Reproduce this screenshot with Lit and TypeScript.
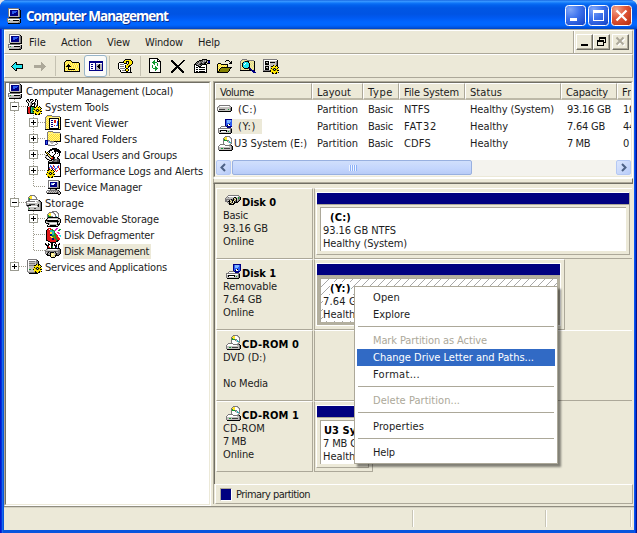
import { LitElement, html, svg, css, nothing } from "lit";
import { customElement, property } from "lit/decorators.js";

// Text run whose tracking is adjusted so that it fills a given advance width.
@customElement("fit-text")
class FitText extends LitElement {
  @property() text = "";
  @property({ type: Number }) w = 0;
  static styles = css`
    :host { display: inline-block; white-space: pre; flex: none; }
  `;
  render() {
    return html`<span>${this.text}</span>`;
  }
  updated() {
    const s = this.renderRoot.querySelector("span") as HTMLElement;
    s.style.letterSpacing = "0px";
    const d = (this.w - s.getBoundingClientRect().width) / this.text.length;
    s.style.letterSpacing = d.toFixed(3) + "px";
  }
}
const t = (text: string, w: number) => html`<fit-text .text=${text} .w=${w}></fit-text>`;

const PAL: Record<string, string> = {
  k: "#000", d: "#424242", g: "#7b797b", l: "#b5b2b5", w: "#fff", n: "#000084", b: "#2c5cf0", c: "#20e6f0",
  y: "#ffe12a", Y: "#fff28c", o: "#848200", G: "#109a30", r: "#e01818", m: "#e020d0", a: "#aca899", t: "#30b0b8",
  s: "#d8d4a0", e: "#7cb4ff", L: "#c2c0bd", p: "#ffe600",
};

// Draws rows of palette letters as one-pixel-high runs; "." is transparent.
const px = (rows: string[], x = 0, y = 0) => {
  const runs: Record<string, string> = {};
  rows.forEach((row, j) => {
    for (const m of row.matchAll(/([^.])\1*/g)) {
      runs[m[1]] = (runs[m[1]] ?? "") + `M${x + m.index!} ${y + j}h${m[0].length}v1h-${m[0].length}z`;
    }
  });
  return Object.entries(runs).map(([c, d]) => svg`<path fill=${PAL[c]} d=${d} />`);
};

const GEAR = [
  "...kp.k..",
  ".kkppkpk.",
  ".pppppppk",
  ".kpokopk.",
  "ppokLkopp",
  "kppokopkk",
  ".ppppppp.",
  ".pkpppkpk",
  "..kkpkk..",
];
const DISC = [
  "...ggggg..",
  "..gyywwLg.",
  ".gyyywwwLg",
  ".gGyywwwwg",
  ".gGGGggwwg",
  ".gwwwgLtwg",
  ".gwwwwLttg",
  ".gwwwwwwLg",
  "..gwwwwLg.",
  "...ggggg..",
];

const icons: Record<string, unknown> = {
  pc: px([
    "..ggggggggggg...",
    "..gwwwwwwwwwlk..",
    "..gwnnnnnnnnlgk.",
    "..gwnnbbbbbnlgk.",
    "..gwnnbbbbnnlgk.",
    "..gwnnbbnnnnlgk.",
    "..gwnnnnnnnnlgk.",
    "..gwnnnnnnnnlgk.",
    "..gllllllllllgk.",
    "...kkkkkkkkkkkk.",
    ".gggggggggggg...",
    ".gwwwwwwwwwwwlk.",
    ".gLGLLLkkkkkklk.",
    ".gLLLLLLLLLLLgk.",
    "..llllllllllggk.",
    "..kkkkkkkkkkkk..",
  ]),
  back: px([
    ".....kk.........",
    "....kck.........",
    "...kcckkkkkkk...",
    "..kccccccccck...",
    ".kcccccccccck...",
    "..kccccccccck...",
    "...kcckkkkkkk...",
    "....kck.........",
    ".....kk.........",
  ], 0, 4),
  fwd: px([
    "........a.......",
    "........aa......",
    "........aaa.....",
    ".aaaaaaaaaaa....",
    ".aaaaaaaaaaaa...",
    ".aaaaaaaaaaa....",
    "........aaa.....",
    "........aa......",
    "........a.......",
  ], 0, 4),
  up: px([
    "..kkkkk.........",
    ".kyYyYyk........",
    "kyYyYyYykkkkkkk.",
    "kYyYyYyYyYyYyYyk",
    "kyYykYyYyYyYyYyk",
    "kYykkkYyYyYyYyYk",
    "kykkkkkyYyYyYyYk",
    "kYyYkyYyYyYyYyYk",
    "kyYykYyYyYyYyYyk",
    "kYyYkkkkkkkYyYyk",
    "kyYyYyYyYyYyYyYk",
    "kkkkkkkkkkkkkkkk",
  ], 0, 2),
  tree: px([
    "nnnnnnnnnnnnnn",
    "nnnnnnnnnnnnnn",
    "nwwwwwnwwwwwwn",
    "nwnnwwnlllklln",
    "nwwwwwnllkklln",
    "nwnnwwnlkkklln",
    "nwwwwwnllkklln",
    "nwnnwwnlllklln",
    "nwwwwwnlllllln",
    "nnnnnnnnnnnnnn",
  ], 1, 3),
  help: px([
    ".......kkkkkk...",
    "......kppppppk..",
    ".....kppkkkpppk.",
    ".kkkkkppk.kpppk.",
    "kwwwwwkkk.kpppk.",
    "kwggggww.kpppk..",
    "kwwwwwwkpppkk...",
    "kwggggwkppkk....",
    "kwwwwwwkppkwk...",
    "kwgggggwkkwwk...",
    ".kwwwwwkppkwk...",
    "..kwgggkppkwk...",
    "..kwwwwwkkwwk...",
    "...kkkkkkkkkkk..",
  ], 1, 1),
  refresh: px([
    ".kkkkkkkkk......",
    ".kwwwwwwwkk.....",
    ".kwwwwGwwkwk....",
    ".kwwwGGwwkkkk...",
    ".kwwGGGGGwwwk...",
    ".kwwwGGwwGwwk...",
    ".kwwwwGwwGwwk...",
    ".kwwGwwwwGwwk...",
    ".kwwGwwGwwwwk...",
    ".kwwGwwGGwwwk...",
    ".kwwwGGGGGwwk...",
    ".kwwwwwGGwwwk...",
    ".kwwwwwGwwwwk...",
    ".kwwwwwwwwwwk...",
    ".kkkkkkkkkkkk...",
  ], 0, 0),
  del: px([
    "kk..........kk..",
    "kkk........kk...",
    ".kkk......kk....",
    "..kkk....kk.....",
    "...kkk..kk......",
    "....kkkkk.......",
    ".....kkk........",
    "....kkkkk.......",
    "...kkk.kkk......",
    "..kkk...kkk.....",
    ".kkk.....kkk....",
    "kkk.......kkk...",
    "kk.........kk...",
  ], 1, 2),
  props: px([
    "........kkkkk...",
    ".....kkkdlgldkkk",
    "...kkgdgdlglkLnn",
    "..kgdlgdlgdkkLnn",
    ".kgdlgdkdgkk.kkk",
    "kkdlgdkdkkkkk...",
    "kwkkdlgkwwwwk...",
    "kwwwkkkwwwwwk...",
    "kwkkwkkkkkkwk...",
    "kwwwwwwwwwwwk...",
    "kwkkwkkkkkkwk...",
    "kwwwwwwwwwwwk...",
    "kwkkwkkkkkkwk...",
    "kkkkkkkkkkkkk...",
  ], 0, 1),
  open: px([
    ".........kkk....",
    "........k...k.k.",
    ".............kk.",
    ".kkk........kkk.",
    "kyYykkkkkkk.....",
    "kYyYyYyYyYk.....",
    "kyYyYyYyYyk.....",
    "kYyYkkkkkkkkkkk.",
    "kyYkoooooooook..",
    "kYkoooooooook...",
    "kykoooooooook...",
    "kkoooooooook....",
    "kkkkkkkkkkk.....",
  ], 0, 2),
  find: px([
    "..ggggg.........",
    ".gsYsYsggggggg..",
    "gsYsgkkkksYsYsk.",
    "gYskcccckYsYsYk.",
    "gskccwccckYsYsk.",
    "gYkcwccccksYsYk.",
    "gskcccccckYsYsk.",
    "gYkcccccckYsYsk.",
    "gsYkcccckksYsYk.",
    "gYsYkkkkdnnYsYk.",
    "gsYsYsYsYknnYsk.",
    "kkkkkkkkkkknnnk.",
    "............nnn.",
    ".............nnn",
  ], 0, 1),
  sets: [px([
    "gggggggggggggg..",
    "gwwwwwwwwwwwwwk.",
    "gwkkkkwLLLLLLgk.",
    "gwkLLkwkkkkkLgk.",
    "gwkkdkwLLLLLLgk.",
    "gwkkkkwLLLLLLgk.",
    "gwLLLLLLLLLLLgk.",
    "gwkkkkwLkkkkLgk.",
    "gwkLLkwLLLLLLgk.",
    "gwkkdkwLLLLLLgk.",
    "gwkkkkwLLLLLLgk.",
    "gggggggggggggggk".slice(0, 15),
    "kkkkkkkkkkkkkkk.",
  ], 0, 1), px(GEAR, 7, 7)],
  tools: [px([
    ".kk.kkk..kk.....",
    "klk.kwlk.kwk....",
    "kwlkwlk..kwk....",
    ".kwllk..kwwk....",
    "..kwlgkkkgwk....",
    "..kwlgk.kgwk....",
    "..kwgk..kwgk....",
    ".kwgkkkkkwlk....",
    ".krrktGGkwlk....",
    ".krrktGGkggk....",
    ".krrktGGkwgk....",
    ".krrktGGkwgk....",
    ".krrktGGkkkk....",
    ".krrktGGk.......",
    ".kkrkkkkk.......",
  ]), px(GEAR, 7, 7)],
  event: px([
    "..ggggg.........",
    ".gyyyyygggggggg.",
    "gyYYYYYYYYYYYYyk",
    "gYyYkkkkkkkkkkYk",
    "gyYykwwwwwwwwkyk",
    "gYyYkwnnwrrwwkYk",
    "gyYykwwwwrrwbkyk",
    "gYyYkwnnwrrwbkYk",
    "gyYykwwwwwwwbkyk",
    "gYyYkwnnwwwwbkYk",
    "gyYykwwwwrwbbkyk",
    "gYyYkwnnwwwwwkYk",
    "gyYykwwwwwwwwkyk",
    "gYyYkkkkkkkkkkYk",
    "kkkkkkkkkkkkkkkk",
  ], 0, 0),
  share: px([
    "...ggggg........",
    "..gyYyYyggggggg.",
    "..gYYYYYYYYYYYYg",
    "..gYyYyYyYyYyYyk",
    "..gyYyYyYyYyYyYk",
    "..gYyYyYyYyYyYyk",
    "..gyYyYyYyYyYyYk",
    "..gYyYyYyYyYyYyk",
    "..gyYyYyYyYyYyYk",
    "nnnggYyYyYyYyYyk",
    "nbnLLggggkkkkkkk",
    "nbnwwLLLLwwg....",
    "nbnwwwLLwwwwg...",
    "nnnLLwwwwwgg....",
    "...ggggggg......",
  ], 0, 0),
  users: px([
    ".......kkkkk....",
    ".....kkkkkkkkk..",
    "....kkkwwkkkkkk.",
    "k..kkwwwwkkdkkkk",
    "kyk.kwwkwwkwwkkk",
    ".kyk.wwwwwkwkwk.",
    "..kykwwwwkwwwwk.",
    "LkkLykwwkwwwwwk.",
    "LLwkLykkkwwwwk..",
    "kLwwkLyrkkwwk...",
    ".kLwwkrrkdwwkk..",
    "..kkLwkkkddggdk.",
    "....kkkLddggddk.",
    "...klLLddgggddk.",
    "...kkkkkkkkkkkk.",
  ], 0, 1),
  perf: [px([
    "...kkkkkkkkkkkkk",
    "...kwwwwwwwwwwwk",
    "...kwbwwrwwwwbwk",
    "...kwbbwrbwwbrwk",
    "...kbwbrwbwwbrwk",
    "...krwrbrwbbwwrk",
    "...kwrwbwrbwwwrk",
    "...kwwwwbwrwrwwk",
    "...kwwwwwwwrwwwk",
    "...kwwwwwwwwwwwk",
    "...kwwwwwwwwwwwk",
    "...kwwwwwwwwwwwk",
    "...kwwwwwwwwwwwk",
    "...kkkkkkkkkkkkk",
  ], 0, 0), px(GEAR, 1, 6)],
  dev: px([
    "...ggggggggggg..",
    "...gwwwwwwwwwgk.",
    "...gwnnnnnnnlgk.",
    "...gwneewwnnlgk.",
    "...gwnewwnnnlgk.",
    "...gwnnnnnnnlgk.",
    "...gwnnnnnnnlgk.",
    "...gllllllllggk.",
    "...kkkkkkkkkkkk.",
    ".....dLLLLdk....",
    "..gggggggggggk..",
    ".gwLgLgLgLgLgLk.",
    ".gLgLgLgLgLgdgLk",
    "..kkkkkkkkkkkgLk",
    ".............kk.",
  ], 0, 1),
  storage: [px(DISC, 1, 0), px([
    "....gggggggg....",
    "...gwwwwwwwwgk..",
    "gggggggggwLLLgk.",
    "gwwwwwwwwwwLLLgk",
    "gLLLLLLLLLLLLLgk",
    "gLLddddddLLLkLgk",
    "gkkkkLLLLLLdkLgk",
    ".ggwwwwwwwwLkLgk",
    "..gLLLLLLLLLLLgk",
    "..gGLLLLddLLLLgk",
    "..gLLLLLLLLLLLgk",
    "..kkkkkkkkkkkkkk",
  ], 0, 4)],
  remov: [px(DISC, 4, 0), px(DISC, 1, 1), px([
    "...kkkkkkkkkk...",
    "..kLLLLLLLLLLkk.",
    ".kLwwwwwwwwwLLLk",
    "kkkkkkkkkkkkkLLk",
    "kLdkkkkkkkkkkkLk",
    "kLLLLLLLLLLLkLLk",
    ".kkkLwwwwwwwkLk.",
    "...kLLLLLLLLkkk.",
    "..kwLkkkkkkLLk..",
    "..kkkkkkkkkkk...",
  ], 0, 6)],
  defrag: px([
    "..rrr.....mm....",
    ".krwrrG..mm..GG.",
    "krrrttGGmm..GG..",
    "krrrttttG......m",
    "krrryyttG..mm..m",
    "krrryyttGr..mm..",
    "krrrnnttGGr.....",
    "krrrnnGGGGrr.cc.",
    "krrryyGGoGrr..cc",
    "krrrryyooGrrr...",
    "krrrrrnnoGGrrr..",
    "krrrrrnnrrGrrr..",
    "kkrrrrrrrrGkk...",
    "..kkrrrrrrkk....",
    "....kkkkkk......",
  ], 1, 1),
  dm: px([
    "k..k..kk..k...k.",
    "kk.kk.kk.k.k.kk.",
    ".kkk..kk.kkk.k..",
    "..kr..kG..kk.k..",
    "..krr.kG..kb.k..",
    "..kkkkkkkkkkkkk.",
    ".gLwwwwwwwwwLLgk",
    "gLLLLLLLLLLLLggk",
    "gggddggggddggggk",
    "gLgkLkkkkLkLLggk",
    "gLkLgkYYYLgkgggk",
    ".kkgLkYwYYgkggk.",
    "..kkkkYYYLkkkk..",
    ".....kYYLYk.....",
    "......kkkk......",
  ], 0, 0),
  serv: [px([
    ".ggggggggg......",
    "gwwwwwwwwgk.....",
    "gwggggggLggk....",
    "gwLLLLLLLggk....",
    "gwggggggLggk....",
    "gwLLLLLLLggk....",
    "gwggggggLggk....",
    "gwLLLLLLLggk....",
    "gwLLLLLLLggk....",
    "gwLLLLLLLggk....",
    "gwGGLLLLLggk....",
    "gwLLLLLLLggk....",
    "gLLLLLLLLggk....",
    ".ggggggggggk....",
    "..kkkkkkkkk.....",
  ], 1, 0), px(GEAR, 7, 5)],
  hdd: px([
    "..ggggggggggg...",
    ".gLwwwwwwwwwLg..",
    "gLLLLLLLLLLLLLk.",
    "gwLLLLLLLLLLLgk.",
    "gwddddddLLLGLgk.",
    "gLLLLLLLLLLLLgk.",
    ".kkkkkkkkkkkkk..",
  ], 0, 3),
  rem: [px([
    "....ggggggggg...",
    "...gwwwwwwwwLg..",
    ".gggggggggggggg.",
    ".gwwwwwwwwwwwgk.",
    ".gLkkkkkkkLLLgk.",
    ".gLkwwwwwkLGLgk.",
    ".gLLLLLLLLLLLgk.",
    "..kkkkkkkkkkkk..",
  ], 0, 7), px([
    "nnnnnnnn",
    "nbeeeebn",
    "nbeeeebn",
    "nbeeebbn",
    "nbbbbbbn",
    "nbbwkbbn",
    "nbkwwbbn",
    ".nnnnnn.",
    "..nnnn..",
  ], 8, 0)],
  cdr: [px([
    "...ggggggggggg..",
    "..gwwwwwwwwwLgk.",
    ".gwwwwwwwwwwLLgk",
    ".gLLLLLLLLLLLLgk",
    ".gLLGGLddddddLgk",
    ".gLLLLLLLLLLLLgk",
    "..kkkkkkkkkkkkk.",
  ], 0, 8), px(DISC, 5, 0)],
  disk0: px([
    "...ggggggggggg..",
    "..gwwwwwwwwwwLg.",
    ".gLgLLLLLkkLLGgk",
    "gLLLLLLLkYgkLGgk",
    "ggggggkgkgYkLggk",
    "ggLLkYgkkYgkLgk.",
    "gggkkgYk.kgkgk..",
    "..gLkYgk.kkkk...",
    "...gkkgYkk......",
    "....kkkkk.......",
  ], 0, 2),
};
icons.sets = [px([
  "gggggggggggggg..",
  "gwwwwwwwwwwwwwk.",
  "gwkkkkwLLLLLLgk.",
  "gwkLLkwkkkkkLgk.",
  "gwkkdkwLLLLLLgk.",
  "gwkkkkwLLLLLLgk.",
  "gwLLLLLLLLLLLgk.",
  "gwkkkkwLkkkkLgk.",
  "gwkLLkwLLLLLLgk.",
  "gwkkdkwLLLLLLgk.",
  "gwkkkkwLLLLLLgk.",
  "ggggggggggggggk.",
  "kkkkkkkkkkkkkkk.",
], 0, 1), px(GEAR, 7, 7)];
const ic = (n: string) => html`<svg class="ic" width="16" height="16" viewBox="0 0 16 16" shape-rendering="crispEdges">${icons[n]}</svg>`;

type Node = [number, string, string, number, string];
// level, icon, label, width, expander
const TREE: Node[] = [
  [0, "pc", "Computer Management (Local)", 147, ""],
  [1, "tools", "System Tools", 64, "-"],
  [2, "event", "Event Viewer", 64, "+"],
  [2, "share", "Shared Folders", 73, "+"],
  [2, "users", "Local Users and Groups", 113, "+"],
  [2, "perf", "Performance Logs and Alerts", 139, "+"],
  [2, "dev", "Device Manager", 78, "end"],
  [1, "storage", "Storage", 39, "-"],
  [2, "remov", "Removable Storage", 95, "+"],
  [2, "defrag", "Disk Defragmenter", 90, ""],
  [2, "dm", "Disk Management", 85, "end"],
  [1, "serv", "Services and Applications", 122, "+"],
];

const VOLUMES: [string, [string, number][]][] = [
  ["hdd", [["(C:)", 19], ["Partition", 41], ["Basic", 25], ["NTFS", 26], ["Healthy (System)", 84], ["93.16 GB", 44], ["10", 12]]],
  ["rem", [["(Y:)", 18], ["Partition", 41], ["Basic", 25], ["FAT32", 33], ["Healthy", 38], ["7.64 GB", 38], ["44", 12]]],
  ["cdr", [["U3 System (E:)", 73], ["Partition", 41], ["Basic", 25], ["CDFS", 27], ["Healthy", 38], ["7 MB", 23], ["0 M", 17]]],
];
const HEADS: [string, number][] = [["Volume", 34], ["Layout", 34], ["Type", 25], ["File System", 55], ["Status", 32], ["Capacity", 42], ["Free", 22]];

// toolbar entries with the gap in front of each; "|" is a separator
const TOOLS: [string, number][] = [
  ["back", 0], ["fwd", 7], ["|", 6], ["up", 8], ["tree", 4], ["|", 2], ["help", 7], ["|", 7], ["refresh", 7],
  ["del", 6], ["props", 8], ["open", 7], ["find", 7], ["sets", 7],
];

const MENU: ([string, number, string] | null)[] = [
  ["Open", 27, ""], ["Explore", 37, ""], null,
  ["Mark Partition as Active", 114, "off"], ["Change Drive Letter and Paths...", 161, "hot"], ["Format...", 47, ""], null,
  ["Delete Partition...", 87, "off"], null, ["Properties", 51, ""], null, ["Help", 22, ""],
];

@customElement("app-root")
class AppRoot extends LitElement {
  static styles = css`
    * { box-sizing: border-box; }
    :host { display: block; position: relative; width: 637px; height: 533px; overflow: hidden; background: #dfe3ea;
      font: 11px/13px "DejaVu Sans Condensed", "DejaVu Sans", sans-serif; color: #1c1c1c; cursor: default; }
    .ic { display: block; flex: none; }
    .win { display: flex; flex-direction: column; height: 533px; border-radius: 7px 7px 0 0; overflow: hidden;
      background: linear-gradient(90deg, #0019cf 0 1px, #0831d9 1px 2px, #166aee 2px 3px, #0855dd 3px 4px, #0855dd 4px 634px, #0855ee 634px 635px, #0038dc 635px 636px, #00138c 636px); }
    .title { flex: none; height: 29px; display: flex; align-items: center; padding: 2px 5px 0 6px;
      background: linear-gradient(#0a58d8 0, #3d98ff 1px, #2b8fff 2px, #1076f8 3px, #0262ee 5px, #0056e4 8px, #0054e3 14px, #005af2 18px, #0066ff 22px, #0066ff 25px, #0058e8 27px, #0044c0 29px); }
    .title b { margin-left: 4px; flex: 1; font: 700 13.5px/18px "Open Sans", "Noto Sans", sans-serif; color: #fff; text-shadow: 1px 1px #0b2f8c; }
    .cap { display: block; margin-left: 2px; }
    .body { flex: 1; margin: 0 3px 3px 4px; background: #ece9d8; display: flex; flex-direction: column; border-top: 1px solid #aca899; min-height: 0; }
    .bar { flex: none; height: 24px; display: flex; border: 1px solid; border-color: #fff #aca899 #aca899 #fff; margin-right: 1px; }
    .menubar { align-items: center; padding-left: 2px; }
    .menubar .gap { flex: 1; }
    .m1 { margin-left: 6px; } .m2 { margin-left: 15px; }
    .mdi { height: 22px; display: flex; align-items: center; padding: 0 2px; border-left: 1px solid #aca899; box-shadow: inset 1px 0 #fff; width: 59px; }
    .mb { width: 17px; height: 16px; border: 1px solid; border-color: #fff #716f64 #716f64 #fff; box-shadow: inset -1px -1px #aca899; flex: none; }
    .mb:last-child { margin-left: 2px; }
    .mb svg { display: block; }
    .tools { align-items: center; padding-left: 5px; }
    .tools .sep { width: 1px; height: 20px; background: #c5c2b2; flex: none; }
    .press { width: 23px; height: 22px; border: 1px solid #98b5c8; border-radius: 3px; background: #fbfbf8; display: flex; align-items: center; justify-content: center; flex: none; }
    .main { flex: 1; display: flex; padding-top: 3px; min-height: 0; }
    .pane { border: 1px solid; border-color: #aca899 #fff #fff #aca899; }
    .inner { border: 1px solid; border-color: #716f64 #ece9d8 #ece9d8 #716f64; height: 100%; overflow: hidden; }
    .tree { width: 207px; flex: none; }
    .tree .inner { background: #fff; padding: 0 0 0 1px; }
    .node { height: 16px; display: flex; align-items: center; }
    .node .lab { height: 15px; padding: 1px 2px 0 1px; margin-left: 2px; }
    .node.sel .lab { background: #ece9d8; }
    .g { width: 19px; height: 16px; flex: none; display: block; }
    .right { flex: 1; margin-left: 2px; display: flex; flex-direction: column; min-width: 0; }
    .list { height: 97px; flex: none; margin-right: 1px; }
    .list .inner { background: #fff; }
    .cols { display: grid; grid-template-columns: 97px 51px 36px 66px 96px 56px 16px; }
    .h { height: 17px; background: #ece9d8; border: 1px solid; border-color: #fff #aca899 #aca899 #fff; border-bottom: 2px solid #bdb9a8; padding: 2px 0 0 4px; overflow: hidden; }
    .r { height: 17px; padding-left: 5px; display: flex; align-items: center; overflow: hidden; }
    .r.num { padding-left: 6px; }
    .r:first-child { padding-left: 2px; }
    .rows { padding-top: 1px; height: 60px; }
    .vn { padding: 1px 2px 1px 5px; height: 15px; }
    .vn.sel { background: #ece9d8; padding-right: 6px; margin-left: -1px; padding-left: 6px; }
    .vn.long { padding: 1px 0 1px 1px; }
    .scroll { height: 16px; display: flex; background: #f4f3ee; }
    .sb { width: 15px; height: 15px; margin: 0 0 0 1px; border: 1px solid #b4c8f4; border-radius: 2px; background: linear-gradient(135deg, #dce6fd, #b8ccf8); flex: none; }
    .thumb { width: 240px; height: 15px; margin-left: 1px; border: 1px solid #98b0e0; border-radius: 2px; background: linear-gradient(#d0dffc, #c3d5fd 60%, #b8cbf6); display: flex; justify-content: center; align-items: center; gap: 1px; }
    .thumb i { width: 1px; height: 6px; background: #eef4fe; box-shadow: 1px 0 #8cb0f8; }
    .sp { flex: 1; }
    .split { flex: none; height: 6px; margin-right: 1px; border: 1px solid; border-color: #fff #716f64 #716f64 #aca899; box-shadow: inset 0 -1px #aca899; }
    .graph { flex: 1; display: flex; flex-direction: column; border-left: 1px solid #aca899; margin: 0 1px 2px 0; min-height: 0; }
    .disks { flex: 1; border-left: 1px solid #716f64; padding: 4px 0 0 1px; }
    .disk { height: 71px; display: flex; }
    .di { width: 97px; border: 1px solid; border-color: #fff #aca899 #aca899 #fff; padding: 7px 0 0 6px; flex: none; }
    .dn { height: 13px; display: flex; align-items: center; font-weight: bold; color: #000; padding-left: 2px; gap: 1px; }
    .dn .ic { margin-top: -4px; }
    .ln { height: 13px; }
    .pa { border: 1px solid; border-color: #fff #aca899 #aca899 #aca899; margin-left: 1px; padding: 3px 2px 3px 1px; flex: none; }
    .d0 .pa, .d2 .pa { width: 318px; border-right: 0; }
    .d1 .pa { width: 251px; } .d3 .pa { width: 59px; }
    .part { height: 63px; border: 1px solid; border-color: #fff #aca899 #aca899 #fff; display: flex; flex-direction: column; }
    .d1 .part { width: 245px; border-color: #fff; } .d0 .part { width: 314px; } .d3 .part { width: 53px; }
    .navy { height: 11px; background: #000080; flex: none; }
    .pb { flex: 1; border-top: 1px solid #aca899; padding: 2px 3px 3px 3px; }
    .pw { height: 100%; background: #fff; border-top: 1px solid #aca899; border-left: 1px solid #aca899; padding: 3px 0 0 2px; overflow: hidden; }
    .d1 .pb { background: #b4b09f; }
    .d1 .pw { background: linear-gradient(135deg, #fff 45%, #a8a8a8 47% 53%, #fff 55%) 0 0 / 8px 8px; }
    .d1 .pw fit-text { background: #fff; }
    .pt { padding-left: 7px; font-weight: bold; color: #000; height: 13px; }
    .pt.flush { padding-left: 1px; }
    .legend { height: 20px; flex: none; margin: 0 0 0 1px; border: 1px solid; border-color: #fff #aca899 #aca899 #fff; display: flex; align-items: center; padding-left: 4px; gap: 4px; }
    .sw { width: 12px; height: 13px; background: #000080; border: 1px solid; border-color: #aca899 #fff #fff #aca899; }
    .status { height: 24px; flex: none; border-top: 1px solid #908d80; box-shadow: inset 0 1px #d4d1c2; display: flex; padding-top: 3px; }
    .status div { border-right: 1px solid #c8c5b6; box-shadow: 1px 0 #fff; height: 17px; }
    .s1 { width: 409px; } .s2 { width: 133px; } .s3 { width: 85px; }
    .menu { position: absolute; left: 354px; top: 286px; width: 204px; height: 178px; background: #fff; border: 1px solid #aca899; padding: 2px; box-shadow: 3px 3px 2px rgba(0,0,0,.45); }
    .mi { height: 17px; padding: 2px 0 0 16px; }
    .off { color: #aca899; } .hot { background: #316ac5; color: #fff; }
    .ms { height: 9px; padding: 3px 1px 0; } .ms i { display: block; height: 1px; background: #aca899; }
  `;

  guides(n: Node, i: number) {
    if (n[0] === 0) return nothing;
    const dots = (d: string) => svg`<path d=${d} stroke="#9d9a8c" stroke-dasharray="1 1" fill="none"/>`;
    const box = svg`<path d="M3.500 3.500h8v8h-8z" fill="#fff" stroke="#9a9a90"/><path d=${n[4] === "+" ? "M5 7.500h5M7.500 5v5" : "M5 7.500h5"} stroke="#000"/>`;
    const last = i === TREE.length - 1;
    const cell = (own: boolean, line: string) => html`<svg class="g" viewBox="0 0 19 16" shape-rendering="crispEdges">
      ${dots(line)}${own ? dots("M8 7.500h11") : nothing}${own && (n[4] === "+" || n[4] === "-") ? box : nothing}</svg>`;
    const full = "M7.500 0v16", half = "M7.500 0v8";
    return n[0] === 1
      ? cell(true, last ? half : full)
      : html`${cell(false, full)}${cell(true, n[4] === "end" ? half : full)}`;
  }

  partition(name: string, nw: number, a: string, aw: number, b: string, bw: number, flush = false) {
    return html`<div class="part"><div class="navy"></div><div class="pb"><div class="pw">
      <div class="pt ${flush ? "flush" : ""}">${t(name, nw)}</div>
      <div class="ln">${t(a, aw)}</div><div class="ln">${t(b, bw)}</div></div></div></div>`;
  }

  disk(k: number, icon: string, name: string, nw: number, lines: [string, number][], part: unknown) {
    return html`<div class="disk d${k}"><div class="di"><div class="dn">${ic(icon)}${t(name, nw)}</div>
      ${lines.map(([s, w]) => html`<div class="ln">${s ? t(s, w) : nothing}</div>`)}</div>
      <div class="pa">${part}</div></div>`;
  }

  tool(name: string, gap: number) {
    const m = `margin-left:${gap}px`;
    if (name === "|") return html`<span class="sep" style=${m}></span>`;
    if (name === "tree") return html`<span class="press" style=${m}>${ic(name)}</span>`;
    return html`<span style=${m}>${ic(name)}</span>`;
  }

  caption(kind: string) {
    const red = kind === "x";
    const id = "g" + kind;
    return html`<svg class="cap" width="21" height="21" viewBox="0 0 21 21">
      <defs><radialGradient id=${id} cx=".25" cy=".2" r="1"><stop offset="0" stop-color=${red ? "#f0a48c" : "#7fa6f8"}/><stop offset=".45" stop-color=${red ? "#e2583a" : "#3f74ee"}/><stop offset="1" stop-color=${red ? "#b83010" : "#1846c8"}/></radialGradient></defs>
      <rect x=".5" y=".5" width="20" height="20" rx="3" fill="url(#${id})" stroke="#fff"/>
      ${kind === "_" ? svg`<path d="M5 13h7v3h-7z" fill="#fff"/>`
        : kind === "o" ? svg`<path fill="#fff" fill-rule="evenodd" d="M5 5h11v11h-11zM6 8v7h9v-7z"/>`
        : svg`<path d="M5.500 5.500l10 10M15.500 5.500l-10 10" stroke="#fff" stroke-width="2.300"/>`}</svg>`;
  }

  render() {
    return html`
    <div class="win">
      <div class="title">${ic("pc")}<b>${t("Computer Management", 142)}</b>${["_", "o", "x"].map((k) => this.caption(k))}</div>
      <div class="body">
        <div class="bar menubar">${ic("pc")}
          <span class="m1">${t("File", 17)}</span><span class="m2">${t("Action", 31)}</span><span class="m2">${t("View", 23)}</span><span class="m2">${t("Window", 38)}</span><span class="m2">${t("Help", 22)}</span>
          <span class="gap"></span>
          <div class="mdi">
            <div class="mb"><svg width="15" height="14" shape-rendering="crispEdges"><path d="M4 9h7v2h-7z"/></svg></div>
            <div class="mb"><svg width="15" height="14" shape-rendering="crispEdges"><path fill-rule="evenodd" d="M5 2h7v6h-2v3h-7v-6h2zM6 4v1h4v2h1v-3zM4 7v3h5v-3z"/></svg></div>
            <div class="mb"><svg width="15" height="14"><path d="M4.500 3.500l7 7M11.500 3.500l-7 7" stroke="#fff" stroke-width="2"/><path d="M3.500 2.500l7 7M10.500 2.500l-7 7" stroke="#aca899" stroke-width="2"/></svg></div>
          </div>
        </div>
        <div class="bar tools">${TOOLS.map(([n, g]) => this.tool(n, g))}</div>
        <div class="main">
          <div class="pane tree"><div class="inner">
            ${TREE.map((n, i) => html`<div class="node ${n[1] === "dm" ? "sel" : ""}">${this.guides(n, i)}${ic(n[1])}<span class="lab">${t(n[2], n[3])}</span></div>`)}
          </div></div>
          <div class="right">
            <div class="pane list"><div class="inner">
              <div class="cols">${HEADS.map(([s, w]) => html`<div class="h">${t(s, w)}</div>`)}</div>
              <div class="rows">
                ${VOLUMES.map(([icon, cells], r) => html`<div class="cols">${cells.map(([s, w], i) => html`<div class="r ${i > 4 ? "num" : ""}">
                  ${i === 0 ? html`${ic(icon)}<span class="vn ${r === 1 ? "sel" : r === 2 ? "long" : ""}">${t(s, w)}</span>` : t(s, w)}</div>`)}</div>`)}
              </div>
              <div class="scroll">
                <div class="sb"><svg width="13" height="13"><path d="M8 3l-3.500 3.500L8 10" fill="none" stroke="#4d6185" stroke-width="2"/></svg></div>
                <div class="thumb"><i></i><i></i><i></i><i></i></div><span class="sp"></span>
                <div class="sb"><svg width="13" height="13"><path d="M5 3l3.500 3.500L5 10" fill="none" stroke="#4d6185" stroke-width="2"/></svg></div>
              </div>
            </div></div>
            <div class="split"></div>
            <div class="graph">
              <div class="disks">
                ${this.disk(0, "disk0", "Disk 0", 34, [["Basic", 25], ["93.16 GB", 45], ["Online", 31]], this.partition("(C:)", 21, "93.16 GB NTFS", 73, "Healthy (System)", 84))}
                ${this.disk(1, "rem", "Disk 1", 34, [["Removable", 54], ["7.64 GB", 39], ["Online", 31]], this.partition("(Y:)", 21, "7.64 GB FAT32", 74, "Healthy", 38))}
                ${this.disk(2, "cdr", "CD-ROM 0", 57, [["DVD (D:)", 43], ["", 0], ["No Media", 45]], nothing)}
                ${this.disk(3, "cdr", "CD-ROM 1", 57, [["CD-ROM", 42], ["7 MB", 23], ["Online", 31]], this.partition("U3 System  (E:)", 87, "7 MB CDFS", 53, "Healthy", 38, true))}
              </div>
              <div class="legend"><span class="sw"></span>${t("Primary partition", 74)}</div>
            </div>
          </div>
        </div>
        <div class="status"><div class="s1"></div><div class="s2"></div><div class="s3"></div></div>
      </div>
    </div>
    <div class="menu">${MENU.map((m) => m ? html`<div class="mi ${m[2]}">${t(m[0], m[1])}</div>` : html`<div class="ms"><i></i></div>`)}</div>`;
  }
}
